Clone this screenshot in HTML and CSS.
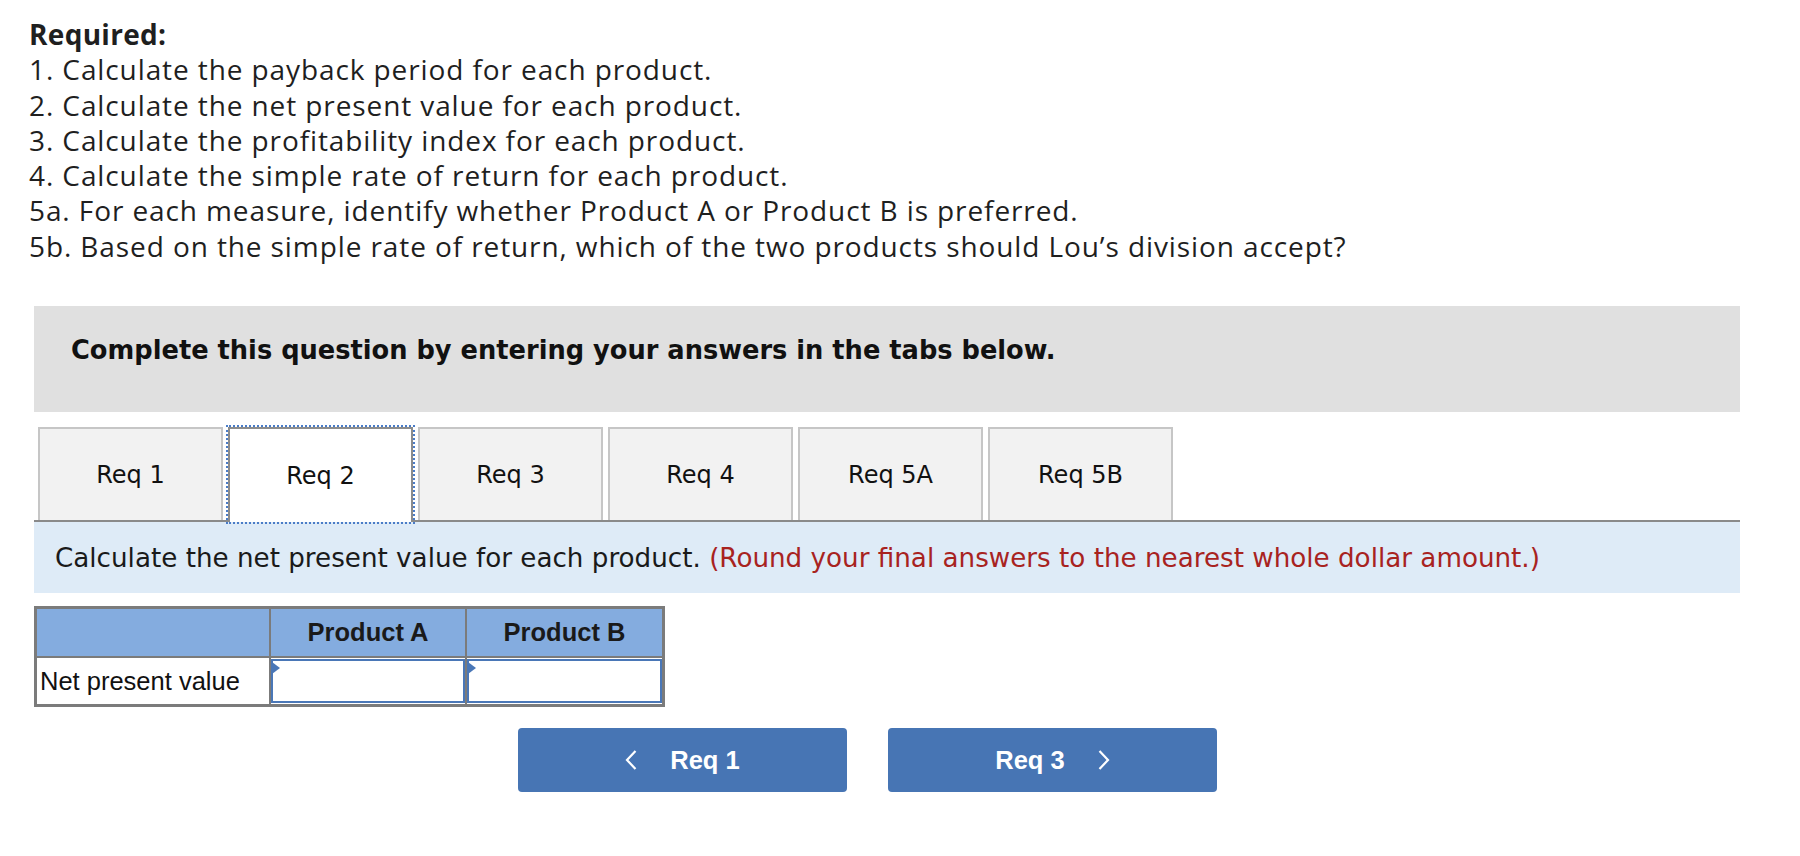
FILE: index.html
```html
<!DOCTYPE html>
<html>
<head>
<meta charset="utf-8">
<link rel="stylesheet" href="styles.css">
</head>
<body>
<div class="page">
  <div class="req">
    <div class="req-title">Required:</div>
    <div>1. Calculate the payback period for each product.</div>
    <div>2. Calculate the net present value for each product.</div>
    <div>3. Calculate the profitability index for each product.</div>
    <div>4. Calculate the simple rate of return for each product.</div>
    <div>5a. For each measure, identify whether Product A or Product B is preferred.</div>
    <div>5b. Based on the simple rate of return, which of the two products should Lou’s division accept?</div>
  </div>

  <div class="panel">
    <div class="banner">Complete this question by entering your answers in the tabs below.</div>

    <div class="tabs">
      <div class="tab">Req 1</div>
      <div class="tab active">Req 2</div>
      <div class="tab">Req 3</div>
      <div class="tab">Req 4</div>
      <div class="tab">Req 5A</div>
      <div class="tab">Req 5B</div>
    </div>

    <div class="instr">Calculate the net present value for each product.&nbsp;<span class="red">(Round your final answers to the nearest whole dollar amount.)</span></div>

    <table class="grid">
      <tr class="head">
        <th class="c1"></th>
        <th class="c2">Product A</th>
        <th class="c3">Product B</th>
      </tr>
      <tr class="body">
        <td class="label">Net present value</td>
        <td class="cell"><div class="inp"></div></td>
        <td class="cell"><div class="inp"></div></td>
      </tr>
    </table>

    <div class="nav">
      <button class="btn">
        <svg class="chev" width="12" height="20" viewBox="0 0 12 20"><polyline points="10.5,1 2,10 10.5,19" fill="none" stroke="#fff" stroke-width="2.2"/></svg>
        <span>Req 1</span>
      </button>
      <button class="btn">
        <span>Req 3</span>
        <svg class="chev" width="12" height="20" viewBox="0 0 12 20"><polyline points="1.5,1 10,10 1.5,19" fill="none" stroke="#fff" stroke-width="2.2"/></svg>
      </button>
    </div>
  </div>
</div>
</body>
</html>
```

FILE: styles.css
```css
html, body {
  margin: 0;
  padding: 0;
  background: #ffffff;
}

.page {
  width: 1800px;
  height: 856px;
  overflow: hidden;
}

.req {
  padding: 17px 0 0 29px;
  font-family: "Open Sans", "Lato", sans-serif;
  font-size: 28px;
  letter-spacing: 0.9px;
  line-height: 35.3px;
  color: #1f1f1f;
}

.req-title {
  font-weight: 700;
  letter-spacing: 0.3px;
}

.panel {
  margin: 42px 0 0 34px;
  width: 1706px;
}

.banner {
  height: 106px;
  box-sizing: border-box;
  background: #e0e0e0;
  padding: 29px 0 0 37px;
  font-family: "DejaVu Sans", Verdana, sans-serif;
  font-weight: 700;
  font-size: 25.7px;
  line-height: 30px;
  color: #111111;
}

.tabs {
  margin-top: 15px;
  padding-left: 4px;
  display: flex;
  gap: 5px;
  align-items: flex-end;
  border-bottom: 2px solid #8a8a8a;
  height: 93px;
}

.tab {
  width: 185px;
  height: 93px;
  box-sizing: border-box;
  border: 2px solid #c6c6c6;
  border-bottom: none;
  background: #f2f2f2;
  display: flex;
  align-items: center;
  justify-content: center;
  font-family: "DejaVu Sans", Verdana, sans-serif;
  font-size: 24px;
  color: #111111;
}

.tab.active {
  background: #ffffff;
  border-color: #8c8c8c;
  height: 95px;
  margin-bottom: -2px;
  outline: 2px dotted #4a7cc7;
  outline-offset: 0;
}

.instr {
  height: 71px;
  box-sizing: border-box;
  background: #deebf7;
  padding-left: 21px;
  display: flex;
  align-items: center;
  font-family: "DejaVu Sans", Verdana, sans-serif;
  font-size: 26.2px;
  color: #1a1a1a;
  white-space: nowrap;
}

.red {
  color: #a8231f;
}

.grid {
  margin-top: 13px;
  border-collapse: collapse;
  border: 3px solid #7b7b7b;
  font-family: "Liberation Sans", Arial, sans-serif;
  font-size: 25.5px;
}

.grid th, .grid td {
  border: 2px solid #7b7b7b;
  padding: 0;
}

.head th {
  height: 47px;
  background: #84acdf;
  color: #1a1a1a;
  font-weight: 700;
  text-align: center;
}

.c1 { width: 232px; }
.c2 { width: 194px; }
.c3 { width: 195px; }

.body td {
  height: 46px;
}

.label {
  background: #ffffff;
  padding-left: 3px !important;
  color: #111111;
  text-align: left;
}

.cell {
  background: #ffffff;
}

.inp {
  position: relative;
  height: 44px;
  border: 2px solid #4a77b7;
  box-sizing: border-box;
  background: #ffffff;
}

.inp::before {
  content: "";
  position: absolute;
  left: -1px;
  top: 1px;
  border-top: 6px solid transparent;
  border-bottom: 6px solid transparent;
  border-left: 8px solid #4a77b7;
}

.nav {
  margin-top: 21px;
  padding-left: 484px;
  display: flex;
  gap: 41px;
}

.btn {
  width: 329px;
  height: 64px;
  border: none;
  border-radius: 4px;
  background: #4775b4;
  color: #ffffff;
  display: flex;
  align-items: center;
  justify-content: center;
  gap: 33px;
  font-family: "Liberation Sans", Arial, sans-serif;
  font-weight: 700;
  font-size: 25.5px;
  padding: 0;
}

.chev {
  display: block;
}
```
